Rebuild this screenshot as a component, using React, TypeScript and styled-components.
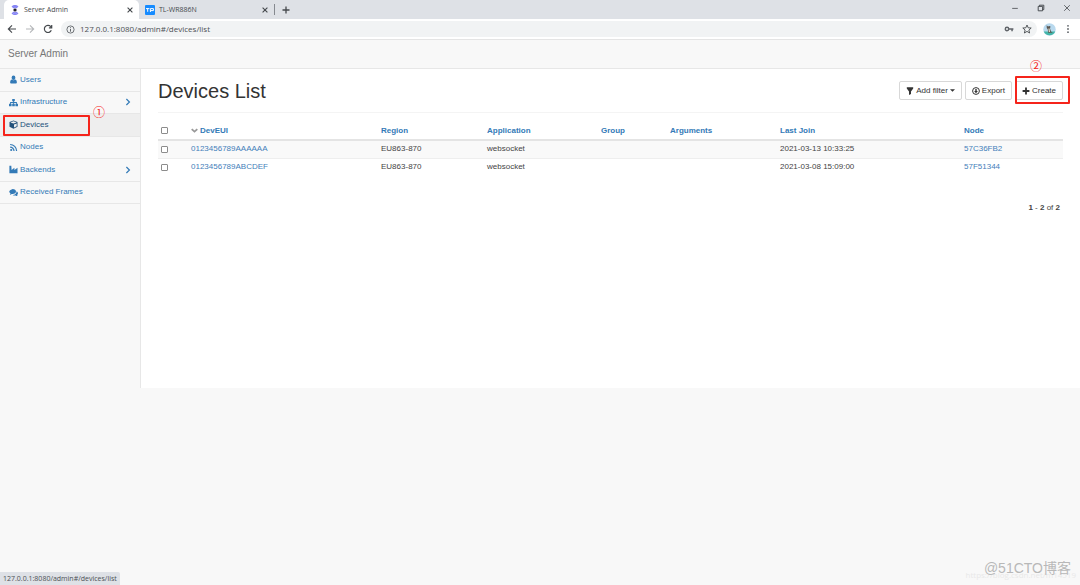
import React from "react";
import styled, { createGlobalStyle, css } from "styled-components";

const Global = createGlobalStyle`
  * { box-sizing: border-box; }
  html, body { margin: 0; background: #f8f8f8; }
  body {
    font-family: "Liberation Sans", Arial, sans-serif;
    font-size: 8px;
    line-height: 12px;
    color: #444;
  }
  button, input { font: inherit; color: inherit; }
  a { color: #4480ba; text-decoration: none; }
`;

const uiFont = css`
  font-family: "Open Sans", "Noto Sans", sans-serif;
`;

const Window = styled.div`
  position: relative;
  display: flex;
  flex-direction: column;
  min-height: 100vh;
`;

/* browser chrome */

const TabStrip = styled.div`
  ${uiFont}
  display: flex;
  align-items: center;
  height: 19px;
  padding-left: 4px;
  background: #dee1e6;
`;

const Tab = styled.div<{ $active?: boolean }>`
  display: flex;
  align-items: center;
  gap: 4px;
  width: 135px;
  height: 19px;
  padding: 0 5px 0 6px;
  font-size: 7px;
  color: #45494d;
  border-radius: 5px 5px 0 0;
  background: ${(p) => (p.$active ? "#fff" : "transparent")};
`;

const TabTitle = styled.span`
  flex: 1;
`;

const PlainButton = styled.button`
  display: flex;
  align-items: center;
  justify-content: center;
  padding: 0;
  border: 0;
  background: none;
  color: #45494d;
`;

const TabDivider = styled.span`
  width: 1px;
  height: 11px;
  margin-right: 6px;
  background: #85898f;
`;

const WindowControls = styled.div`
  display: flex;
  gap: 18px;
  margin-left: auto;
  padding: 0 9px 3px 0;
`;

const Toolbar = styled.div`
  display: flex;
  align-items: center;
  height: 21px;
  padding: 0 7px;
  gap: 6px;
  background: #fff;
  border-bottom: 1px solid #e4e4e4;
`;

const NavButtons = styled.div`
  display: flex;
  gap: 8px;
  padding-right: 2px;
`;

const ProfileButtons = styled.div`
  display: flex;
  align-items: center;
  gap: 7px;
`;

const AddressBar = styled.div`
  ${uiFont}
  display: flex;
  flex: 1;
  align-items: center;
  gap: 5px;
  height: 16px;
  padding: 0 5px;
  border-radius: 8px;
  background: #f1f3f4;
  color: #5f6368;
`;

const AddressInput = styled.input`
  flex: 1;
  min-width: 0;
  padding: 0;
  border: 0;
  outline: 0;
  background: none;
  font-size: 8px;
  color: #4c5054;
`;

const AddressActions = styled.div`
  display: flex;
  gap: 8px;
`;

/* application */

const Header = styled.header`
  display: flex;
  align-items: center;
  height: 29px;
  padding: 0 8px;
  border-bottom: 1px solid #e7e7e7;
  font-size: 10px;
`;

const Brand = styled.a`
  color: #777;
`;

const Body = styled.div`
  display: flex;
`;

const Sidebar = styled.nav`
  width: 141px;
  flex-shrink: 0;
  border-right: 1px solid #e7e7e7;
`;

const Menu = styled.ul`
  display: grid;
  grid-template-rows: repeat(6, 1fr);
  height: 135px;
  margin: 0;
  padding: 0;
  list-style: none;
`;

const MenuItem = styled.li`
  position: relative;
  border-bottom: 1px solid #e7e7e7;
`;

const MenuLink = styled.a<{ $active?: boolean }>`
  display: flex;
  align-items: center;
  gap: 2px;
  height: 100%;
  padding: 0 8px 0 9px;
  color: ${(p) => (p.$active ? "#23527c" : "#337ab7")};
  background: ${(p) => (p.$active ? "#eee" : "transparent")};
`;

const MenuLabel = styled.span`
  flex: 1;
`;

const Main = styled.main`
  flex: 1;
  min-width: 0;
  min-height: 319px;
  padding: 0 17px;
  background: #fff;
`;

const PageHead = styled.div`
  display: flex;
  align-items: center;
  justify-content: space-between;
  height: 44px;
  border-bottom: 1px solid #f4f4f4;
`;

const Title = styled.h1`
  margin: 0;
  font-size: 20px;
  line-height: 24px;
  font-weight: 400;
  color: #333;
`;

const Actions = styled.div`
  display: flex;
  gap: 3px;
`;

const ActionButton = styled.button`
  display: flex;
  align-items: center;
  gap: 2px;
  height: 19px;
  padding: 0 6px;
  border: 1px solid #d8d8d8;
  border-radius: 2px;
  background: #fff;
  color: #333;
`;

const CreateWrap = styled.div`
  position: relative;
`;

const Table = styled.table`
  width: 100%;
  margin-top: 9px;
  table-layout: fixed;
  border-collapse: collapse;
`;

const HeadCell = styled.th`
  height: 18px;
  padding: 0 0 0 5px;
  text-align: left;
  vertical-align: middle;
  border-bottom: 2px solid #e4e4e4;
`;

const HeadLink = styled.a`
  display: flex;
  align-items: center;
  gap: 2px;
  color: #337ab7;
`;

const Row = styled.tr`
  &:nth-child(odd) {
    background: #f9f9f9;
  }
`;

const Cell = styled.td`
  height: 18px;
  padding: 0 0 0 5px;
  vertical-align: middle;
  border-bottom: 1px solid #eee;
  tr:last-child > & {
    border-bottom: 0;
  }
`;

const Check = styled.input`
  display: block;
  appearance: none;
  width: 7px;
  height: 7px;
  margin: 0 0 0 -2px;
  border: 1px solid #8c8c8c;
  border-radius: 1px;
  background: #fff;
`;

const Summary = styled.div`
  margin-top: 26px;
  padding-right: 3px;
  text-align: right;
`;

/* overlays */

const StatusBubble = styled.div`
  ${uiFont}
  position: absolute;
  left: 0;
  bottom: 0;
  height: 13px;
  padding: 0 3px;
  border-radius: 0 2px 0 0;
  background: #dee1e6;
  font-size: 7px;
  line-height: 13px;
  color: #4c5054;
`;

const Callout = styled.span`
  position: absolute;
  border: 2px solid #f5241b;
  border-radius: 1px;
  pointer-events: none;
`;

const MenuCallout = styled(Callout)`
  top: 1px;
  left: 3px;
  width: 87px;
  height: 21px;
`;

const CreateCallout = styled(Callout)`
  top: -5px;
  right: -7px;
  bottom: -4px;
  left: 0;
`;

const StepMark = styled.span`
  position: absolute;
  font-family: "Noto Sans CJK SC", sans-serif;
  font-size: 12px;
  line-height: 14px;
  color: #f5241b;
`;

const MenuStep = styled(StepMark)`
  top: -9px;
  left: 93px;
`;

const CreateStep = styled(StepMark)`
  top: -22px;
  left: 15px;
`;

const Watermark = styled.div`
  position: absolute;
  right: 9px;
  bottom: 7px;
  font-family: "Liberation Sans", "Noto Sans CJK SC", sans-serif;
  font-size: 14px;
  line-height: 20px;
  color: #b8b8b8;
`;

const SourceMark = styled.div`
  ${uiFont}
  position: absolute;
  right: 4px;
  bottom: 4px;
  color: #e8e8e8;
`;

type StrokeProps = { d: string; size?: number; width?: number; color?: string };

const Stroke = ({ d, size = 10, width = 1, color = "currentColor" }: StrokeProps) => (
  <svg width={size} height={size} viewBox="0 0 10 10" fill="none" stroke={color} strokeWidth={width} aria-hidden="true">
    <path d={d} />
  </svg>
);

const CROSS = "M2 2 8 8M8 2 2 8";

const SignalIcon = () => (
  <svg width="10" height="10" viewBox="0 0 10 10" aria-hidden="true">
    <path d="M2 2Q5-.8 8 2M3 3Q5 1.2 7 3M2 8Q5 10.8 8 8M3 7Q5 8.8 7 7" fill="none" stroke="#8584f5" strokeWidth="1.4" />
    <path d="M5 3.4v3.2M3.4 5h3.2" stroke="#17151f" strokeWidth="1.6" />
  </svg>
);

const RouterIcon = () => (
  <svg width="10" height="10" viewBox="0 0 10 10" aria-hidden="true">
    <rect width="10" height="10" rx="1" fill="#168bff" />
    <path d="M1 3.6h3.4M2.7 3.6v3.2M5.4 7V3.6h3v2H5.8" fill="none" stroke="#fff" strokeWidth="1" />
  </svg>
);

const AvatarIcon = () => (
  <svg width="13" height="13" viewBox="0 0 13 13" aria-hidden="true">
    <circle cx="6.5" cy="6.5" r="6.2" fill="#b9d9ee" />
    <path d="M.8 8.4h11.4a6.2 6.2 0 0 1-11.4 0Z" fill="#43b5a8" />
    <path d="M3.6 2.2 5 3.6l1.5-.5 1 .5-.5 2 1 3 1.8 1.2H5.2L4.8 6.4 3.8 5Z" fill="#5b5650" />
    <path d="M5.4 5.6h1.2l.5 3.5H5.8Z" fill="#e4dccb" />
  </svg>
);

const KeyIcon = () => (
  <svg width="10" height="10" viewBox="0 0 10 10" aria-hidden="true">
    <path d="M5 4.2h4.4v1.6H8.8v1.4H7.3V5.8H5" fill="#5f6368" />
    <circle cx="3" cy="5" r="1.7" fill="none" stroke="#5f6368" strokeWidth="1.4" />
  </svg>
);

const MoreIcon = () => (
  <svg width="10" height="10" viewBox="0 0 10 10" fill="#5f6368" aria-hidden="true">
    <circle cx="5" cy="1.8" r=".9" />
    <circle cx="5" cy="5" r=".9" />
    <circle cx="5" cy="8.2" r=".9" />
  </svg>
);

const InfoIcon = () => (
  <svg width="9" height="9" viewBox="0 0 10 10" fill="none" stroke="currentColor" aria-hidden="true">
    <circle cx="5" cy="5" r="4" />
    <path d="M5 4.4v3M5 2.5v1" strokeWidth="1.1" />
  </svg>
);

const FilterIcon = () => (
  <svg width="8" height="8" viewBox="0 0 8 8" fill="#333" aria-hidden="true">
    <path d="M.8.2h6.4v1.4L5 4.4V7L3 8V4.4L.8 1.6Z" />
  </svg>
);

const ExportIcon = () => (
  <svg width="8" height="8" viewBox="0 0 8 8" aria-hidden="true">
    <circle cx="4" cy="4" r="3.4" fill="none" stroke="#333" />
    <path d="M3.3 1.9h1.4v2h1.2L4 6.2 2.1 3.9h1.2Z" fill="#333" />
  </svg>
);

const PlusIcon = () => (
  <svg width="8" height="8" viewBox="0 0 8 8" aria-hidden="true">
    <path d="M4 .6v6.8M.6 4h6.8" stroke="#333" strokeWidth="1.8" />
  </svg>
);

const CaretIcon = () => (
  <svg width="5" height="3" viewBox="0 0 5 3" aria-hidden="true">
    <path d="M0 .3h5L2.5 2.8Z" fill="#333" />
  </svg>
);

const MenuIcon = ({ children }: { children: React.ReactNode }) => (
  <svg width="9" height="9" viewBox="0 0 9 9" fill="currentColor" aria-hidden="true">
    {children}
  </svg>
);

const menu = [
  {
    label: "Users",
    href: "#/users/list",
    icon: (
      <>
        <ellipse cx="4.5" cy="2.8" rx="1.9" ry="2.2" />
        <path d="M2.6 4.4Q4.5 6 6.4 4.4 7.9 4.8 7.9 7.2 7.9 8.4 6.9 8.4H2.1Q1.1 8.4 1.1 7.2 1.1 4.8 2.6 4.4Z" />
      </>
    ),
  },
  {
    label: "Infrastructure",
    href: "#/infrastructure",
    nested: true,
    icon: <path d="M3.2.9h2.6v2.4H4.9v.8h3v1.7H9v2.4H6.4V5.8H7.1V4.9H4.9v.9h.9v2.4H3.2V5.8h.9v-.9H1.9v.9h.7v2.4H0V5.8h1.1V4.1h3v-.8h-.9Z" />,
  },
  {
    label: "Devices",
    href: "#/devices/list",
    active: true,
    icon: <path fillRule="evenodd" d="M4.5.5 8.5 1.9V6.7L4.5 8.7.5 6.7V1.9ZM4.5 1.3 1.4 2.4 4.5 3.5 7.6 2.4ZM5 4.4V7.5L7.7 6.2V3.4Z" />,
  },
  {
    label: "Nodes",
    href: "#/nodes/list",
    icon: (
      <>
        <circle cx="2.2" cy="7" r="1.1" />
        <path d="M1.1 4.1A3.9 3.9 0 0 1 5 8M1.1 1.5A6.5 6.5 0 0 1 7.6 8" fill="none" stroke="currentColor" strokeWidth="1.2" />
      </>
    ),
  },
  {
    label: "Backends",
    href: "#/backends",
    nested: true,
    icon: <path d="M.4.8H2.3L2.6 4.9 5.4 2.8V4.9L8.5 2.8V8.3H.4Z" />,
  },
  {
    label: "Received Frames",
    href: "#/rxframes/list",
    icon: (
      <>
        <path d="M3.6 1.1C5.7 1.1 7 2.2 7 3.6S5.7 6.1 3.6 6.1L2.8 6Q1.9 6.8.8 6.9L1.5 5.6Q.2 4.8.2 3.6.2 2.2 3.6 1.1Z" />
        <path d="M7.7 3.2Q9 4 9 5.2 9 6.3 8 7L8.6 8.1Q7.4 8.1 6.6 7.5 4.8 7.8 3.6 6.9 7.2 6.7 7.7 3.2Z" />
      </>
    ),
  },
];

const columns = ["DevEUI", "Region", "Application", "Group", "Arguments", "Last Join", "Node"];
const columnWidths = [28, 190, 106, 114, 69, 110, 184];

const devices = [
  { eui: "0123456789AAAAAA", region: "EU863-870", app: "websocket", joined: "2021-03-13 10:33:25", node: "57C36FB2" },
  { eui: "0123456789ABCDEF", region: "EU863-870", app: "websocket", joined: "2021-03-08 15:09:00", node: "57F51344" },
];

export default function App() {
  return (
    <Window>
      <Global />
      <TabStrip>
        <Tab $active>
          <SignalIcon />
          <TabTitle>Server Admin</TabTitle>
          <PlainButton aria-label="Close tab"><Stroke d={CROSS} size={8} width={1.4} /></PlainButton>
        </Tab>
        <Tab>
          <RouterIcon />
          <TabTitle>TL-WR886N</TabTitle>
          <PlainButton aria-label="Close tab"><Stroke d={CROSS} size={8} width={1.4} /></PlainButton>
        </Tab>
        <TabDivider />
        <PlainButton aria-label="New tab"><Stroke d="M5 1.5v7M1.5 5h7" width={1.3} /></PlainButton>
        <WindowControls>
          <PlainButton aria-label="Minimize"><Stroke d="M1.5 5.5h7" size={8} /></PlainButton>
          <PlainButton aria-label="Restore"><Stroke d="M1.5 3h5.5v5.5H1.5ZM3 3V1.5h5.5V7H7" size={8} width={1.2} /></PlainButton>
          <PlainButton aria-label="Close"><Stroke d="M1.5 1.5l7 7M8.5 1.5l-7 7" size={8} /></PlainButton>
        </WindowControls>
      </TabStrip>
      <Toolbar>
        <NavButtons>
          <PlainButton aria-label="Back"><Stroke d="M9 5H1.5M5 1.3 1.3 5 5 8.7" width={1.1} /></PlainButton>
          <PlainButton aria-label="Forward"><Stroke d="M1 5h7.5M5 1.3 8.7 5 5 8.7" width={1.1} color="#b5b7ba" /></PlainButton>
          <PlainButton aria-label="Reload"><Stroke d="M8.3 6.3A3.6 3.6 0 1 1 7.6 2.4L8.6 3.6M8.7 1v2.8H5.9" width={1.2} /></PlainButton>
        </NavButtons>
        <AddressBar>
          <InfoIcon />
          <AddressInput aria-label="Address" defaultValue="127.0.0.1:8080/admin#/devices/list" />
          <AddressActions>
            <PlainButton aria-label="Saved passwords"><KeyIcon /></PlainButton>
            <PlainButton aria-label="Bookmark"><Stroke d="M5 1 6.2 3.8 9.2 4 6.9 6 7.6 9 5 7.4 2.4 9 3.1 6 .8 4 3.8 3.8Z" width={0.9} /></PlainButton>
          </AddressActions>
        </AddressBar>
        <ProfileButtons>
          <PlainButton aria-label="Profile"><AvatarIcon /></PlainButton>
          <PlainButton aria-label="Menu"><MoreIcon /></PlainButton>
        </ProfileButtons>
      </Toolbar>

      <Header><Brand href="#/">Server Admin</Brand></Header>
      <Body>
        <Sidebar>
          <Menu>
            {menu.map(({ label, icon, href, nested, active }) => (
              <MenuItem key={label}>
                <MenuLink href={href} $active={active}>
                  <MenuIcon>{icon}</MenuIcon>
                  <MenuLabel>{label}</MenuLabel>
                  {nested && <Stroke d="M3 1.2 6.8 5 3 8.8" size={8} width={1.5} />}
                </MenuLink>
                {active && (
                  <>
                    <MenuCallout />
                    <MenuStep>①</MenuStep>
                  </>
                )}
              </MenuItem>
            ))}
          </Menu>
        </Sidebar>
        <Main>
          <PageHead>
            <Title>Devices List</Title>
            <Actions>
              <ActionButton><FilterIcon />Add filter<CaretIcon /></ActionButton>
              <ActionButton><ExportIcon />Export</ActionButton>
              <CreateWrap>
                <ActionButton><PlusIcon />Create</ActionButton>
                <CreateCallout />
                <CreateStep>②</CreateStep>
              </CreateWrap>
            </Actions>
          </PageHead>
          <Table>
            <colgroup>
              {columnWidths.map((w, i) => <col key={i} width={w} />)}
              <col />
            </colgroup>
            <thead>
              <tr>
                <HeadCell><Check type="checkbox" aria-label="Select all" /></HeadCell>
                {columns.map((name, i) => (
                  <HeadCell key={name}>
                    <HeadLink href="#/devices/list">
                      {i === 0 && <Stroke d="M1 3 5 6.6 9 3" size={7} width={2.6} color="#999" />}
                      {name}
                    </HeadLink>
                  </HeadCell>
                ))}
              </tr>
            </thead>
            <tbody>
              {devices.map((d) => (
                <Row key={d.eui}>
                  <Cell><Check type="checkbox" aria-label={`Select ${d.eui}`} /></Cell>
                  <Cell><a href="#/devices/edit">{d.eui}</a></Cell>
                  <Cell>{d.region}</Cell>
                  <Cell>{d.app}</Cell>
                  <Cell />
                  <Cell />
                  <Cell>{d.joined}</Cell>
                  <Cell><a href="#/nodes/edit">{d.node}</a></Cell>
                </Row>
              ))}
            </tbody>
          </Table>
          <Summary><b>1</b> - <b>2</b> of <b>2</b></Summary>
        </Main>
      </Body>

      <StatusBubble>127.0.0.1:8080/admin#/devices/list</StatusBubble>
      <SourceMark>https://blog.csdn.net/m14519</SourceMark>
      <Watermark>@51CTO博客</Watermark>
    </Window>
  );
}
